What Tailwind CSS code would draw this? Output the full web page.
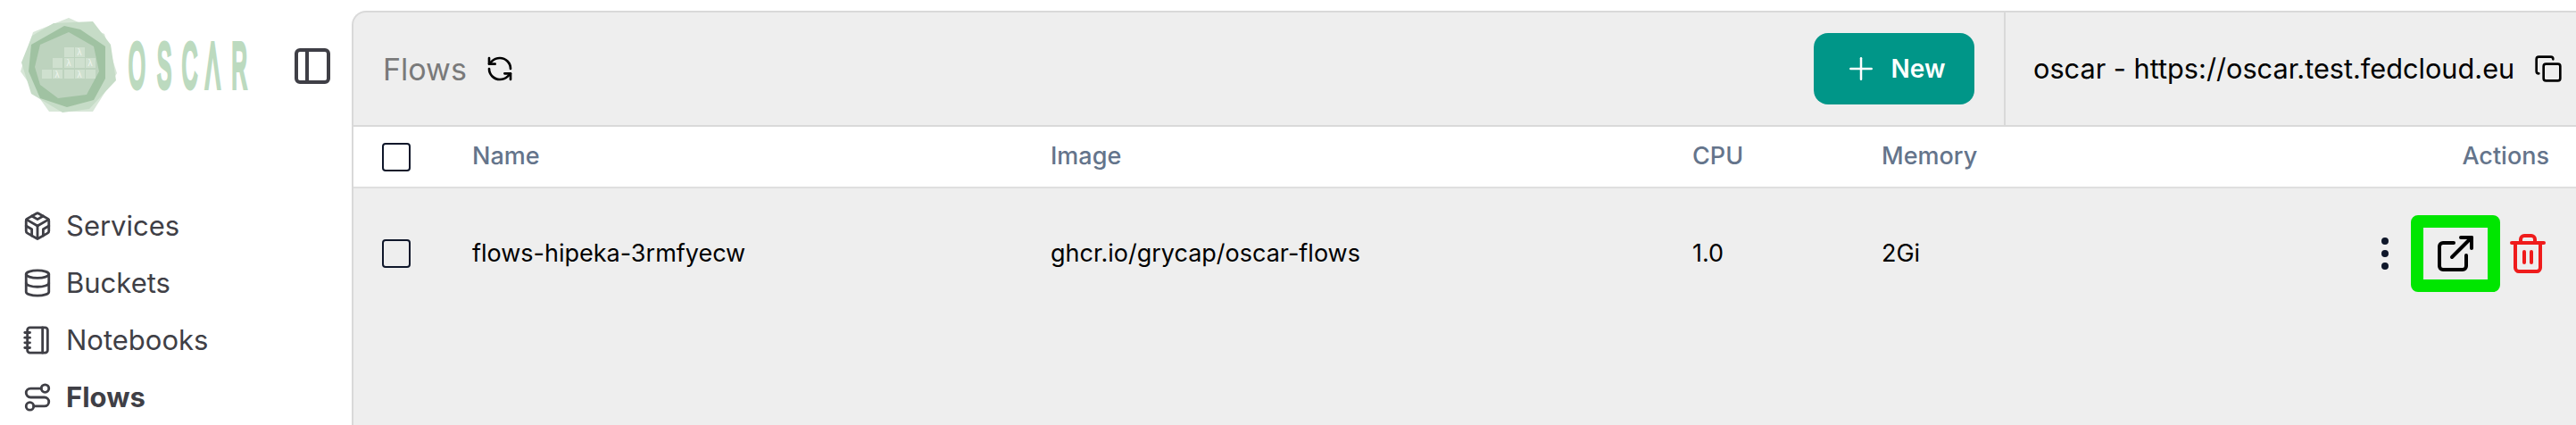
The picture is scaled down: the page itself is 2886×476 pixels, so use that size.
<!DOCTYPE html>
<html lang="en">
<head>
  <meta charset="UTF-8" />
  <title>OSCAR - Flows</title>
  <script src="https://cdn.jsdelivr.net/npm/@tailwindcss/browser@4"></script>
</head>
<body class="bg-white font-['Inter',sans-serif] h-[476px] overflow-hidden">
  <div class="flex h-[476px]">

    <!-- sidebar -->
    <aside class="w-[394px] shrink-0 text-[#3f3f46]">
      <div class="flex items-center h-[147px]">
        <svg class="w-[280px] h-[147px]" viewBox="0 0 280 147" role="img" aria-label="OSCAR">
          <polygon fill="#d8e7d8" points="77,20 117,38 131,82 104,125 55,125 23,80 37,36" />
          <polygon fill="#c6dcc7" points="60,26 104,24 124,50 130,90 100,122 70,126 35,105 24,70 36,40" />
          <polygon fill="#a0c2a2" points="72,29 90,33 118,52 118,88 105,112 75,120 45,110 32,80 35,50" />
          <polygon fill="#bdd3be" points="77,36 105,52 111,80 97,106 65,110 45,95 39,75 45,50" />
          <g fill="#cfe0cf">
            <rect x="72" y="53" width="11" height="11" /><rect x="84" y="53" width="11" height="11" />
            <rect x="59" y="65" width="11" height="11" /><rect x="72" y="65" width="11" height="11" /><rect x="84" y="65" width="11" height="11" /><rect x="96" y="65" width="11" height="11" />
            <rect x="47" y="78" width="11" height="10" /><rect x="59" y="78" width="11" height="10" /><rect x="72" y="78" width="11" height="10" /><rect x="84" y="78" width="11" height="10" /><rect x="96" y="78" width="11" height="10" />
          </g>
          <g fill="#eef5ee" font-size="10" font-family="Liberation Sans" text-anchor="middle">
            <text x="89" y="62">λ</text><text x="77" y="74">λ</text><text x="101" y="74">λ</text><text x="64" y="87">λ</text><text x="89" y="87">λ</text>
          </g>
          <text transform="translate(144 97.5) scale(.34 .98)" x="0 94 176 254 340" fill="#bcdabf" stroke="#bcdabf" stroke-width="6" font-size="71" font-family="Liberation Sans">OSCΛR</text>
        </svg>
        <button class="ml-[46px]">
          <svg class="w-12 h-12" viewBox="0 0 24 24" fill="none" stroke="#3f3f46" stroke-width="2" stroke-linecap="round" stroke-linejoin="round"><rect width="18" height="18" x="3" y="3" rx="2" /><path d="M9 3v18" /></svg>
        </button>
      </div>
      <nav class="mt-[74px] pl-[25px] text-[31px]">
        <a class="flex items-center gap-[15px] h-16">
          <svg class="w-[34px] h-[34px]" viewBox="0 0 24 24" fill="none" stroke="currentColor" stroke-width="2" stroke-linecap="round" stroke-linejoin="round"><path d="M21 16V8a2 2 0 0 0-1-1.73l-7-4a2 2 0 0 0-2 0l-7 4A2 2 0 0 0 3 8v8a2 2 0 0 0 1 1.73l7 4a2 2 0 0 0 2 0l7-4A2 2 0 0 0 21 16z" /><path d="M7.5 4.21 12 6.81 16.5 4.21" /><path d="M7.5 19.79V14.6L3 12" /><path d="M21 12l-4.5 2.6v5.19" /><path d="M3.27 6.96 12 12.01l8.73-5.05" /><path d="M12 22.08V12" /></svg>
          <span>Services</span>
        </a>
        <a class="flex items-center gap-[15px] h-16">
          <svg class="w-[34px] h-[34px]" viewBox="0 0 24 24" fill="none" stroke="currentColor" stroke-width="2" stroke-linecap="round" stroke-linejoin="round"><ellipse cx="12" cy="5" rx="9" ry="3" /><path d="M3 5V19A9 3 0 0 0 21 19V5" /><path d="M3 12A9 3 0 0 0 21 12" /></svg>
          <span>Buckets</span>
        </a>
        <a class="flex items-center gap-[15px] h-16">
          <svg class="w-[34px] h-[34px]" viewBox="0 0 24 24" fill="none" stroke="currentColor" stroke-width="2" stroke-linecap="round" stroke-linejoin="round"><path d="M2 6h4" /><path d="M2 10h4" /><path d="M2 14h4" /><path d="M2 18h4" /><rect width="16" height="20" x="4" y="2" rx="2" /><path d="M16 2v20" /></svg>
          <span>Notebooks</span>
        </a>
        <a class="flex items-center gap-[15px] h-16 font-bold">
          <svg class="w-[34px] h-[34px]" viewBox="0 0 24 24" fill="none" stroke="currentColor" stroke-width="2" stroke-linecap="round" stroke-linejoin="round"><circle cx="6" cy="19" r="3" /><path d="M9 19h8.5a3.5 3.5 0 0 0 0-7h-11a3.5 3.5 0 0 1 0-7H15" /><circle cx="18" cy="5" r="3" /></svg>
          <span>Flows</span>
        </a>
      </nav>
    </aside>

    <!-- main panel -->
    <main class="flex-1 mt-3 border-l-2 border-t-2 border-[#d9d9d9] rounded-tl-2xl bg-[#eeeeee] overflow-hidden">
      <header class="flex h-[128px] border-b-2 border-[#d9d9d9]">
        <div class="flex-1 flex items-center pl-[33px] pr-[33px]">
          <h1 class="text-[34px] text-[#7a7a7a]">Flows</h1>
          <svg class="w-8 h-8 ml-[21px]" viewBox="0 0 24 24" fill="none" stroke="#000" stroke-width="2" stroke-linecap="round" stroke-linejoin="round"><path d="M21 12a9 9 0 0 0-9-9 9.75 9.75 0 0 0-6.74 2.74L3 8" /><path d="M3 3v5h5" /><path d="M3 12a9 9 0 0 0 9 9 9.75 9.75 0 0 0 6.74-2.74L21 16" /><path d="M16 16h5v5" /></svg>
          <button class="ml-auto flex items-center justify-center gap-[14px] w-[180px] h-20 rounded-2xl bg-[#009688] text-white text-[28px] font-semibold">
            <svg class="w-10 h-10" viewBox="0 0 24 24" fill="none" stroke="currentColor" stroke-width="1.5" stroke-linecap="round" stroke-linejoin="round"><path d="M5 12h14" /><path d="M12 5v14" /></svg>
            <span>New</span>
          </button>
        </div>
        <div class="w-[641px] shrink-0 flex items-center border-l-2 border-[#d9d9d9] pl-[31px] text-[30.7px] text-black">
          <span>oscar - https://oscar.test.fedcloud.eu</span>
          <svg class="w-8 h-8 ml-[22px]" viewBox="0 0 24 24" fill="none" stroke="#000" stroke-width="2" stroke-linecap="round" stroke-linejoin="round"><rect width="14" height="14" x="8" y="8" rx="2" /><path d="M4 16c-1.1 0-2-.9-2-2V4c0-1.1.9-2 2-2h10c1.1 0 2 .9 2 2" /></svg>
        </div>
      </header>

      <div class="grid grid-cols-[101px_648px_719px_212px_1fr] items-center h-[69px] pl-[32px] pr-[30px] bg-white border-b-2 border-[#dfdfdf] text-[27px] font-medium text-[#64748b]">
        <span class="block w-8 h-8 rounded-[4px] border-2 border-[#0f172a]"></span>
        <span>Name</span>
        <span>Image</span>
        <span>CPU</span>
        <span class="flex justify-between"><span>Memory</span><span>Actions</span></span>
      </div>

      <div class="grid grid-cols-[101px_648px_719px_212px_1fr] items-center h-[146px] pl-[32px] pr-[30px] text-[27px] text-black">
        <span class="block w-8 h-8 rounded-[4px] border-2 border-[#0f172a]"></span>
        <span>flows-hipeka-3rmfyecw</span>
        <span>ghcr.io/grycap/oscar-flows</span>
        <span>1.0</span>
        <div class="flex items-center justify-between">
          <span>2Gi</span>
          <div class="flex items-center">
            <svg class="w-12 h-12" viewBox="0 0 24 24" fill="#0f172a" stroke="#0f172a" stroke-width="2"><circle cx="12" cy="5" r="1" /><circle cx="12" cy="12" r="1" /><circle cx="12" cy="19" r="1" /></svg>
            <div class="flex items-center justify-center w-[100px] h-[86px] ml-[5px] mr-[7px] border-[14px] border-[#00e600] rounded-lg">
              <svg class="w-12 h-12 shrink-0" viewBox="0 0 24 24" fill="none" stroke="#000" stroke-width="2" stroke-linecap="round" stroke-linejoin="round"><path d="M15 3h6v6" /><path d="M10 14 21 3" /><path d="M18 13v6a2 2 0 0 1-2 2H5a2 2 0 0 1-2-2V8a2 2 0 0 1 2-2h6" /></svg>
            </div>
            <svg class="w-12 h-12" viewBox="0 0 24 24" fill="none" stroke="#ef1c1c" stroke-width="2" stroke-linecap="round" stroke-linejoin="round"><path d="M3 6h18" /><path d="M19 6v14c0 1-1 2-2 2H7c-1 0-2-1-2-2V6" /><path d="M8 6V4c0-1 1-2 2-2h4c1 0 2 1 2 2v2" /><path d="M10 11v6" /><path d="M14 11v6" /></svg>
          </div>
        </div>
      </div>
    </main>
  </div>
</body>
</html>
